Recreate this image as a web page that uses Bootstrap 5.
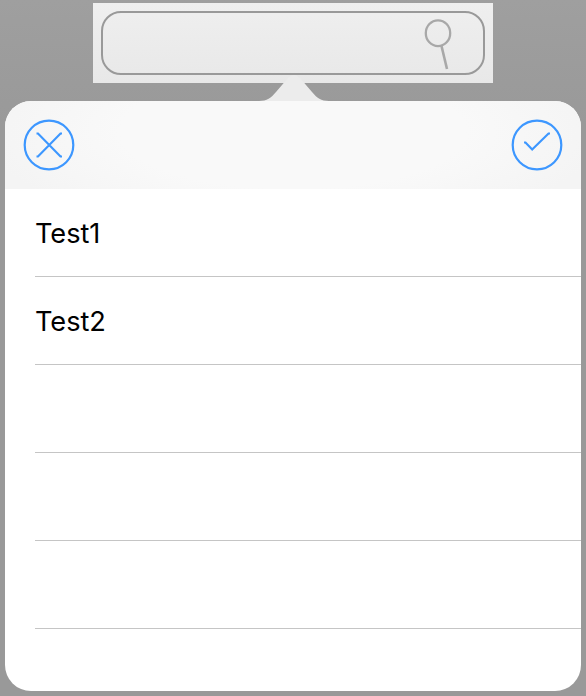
<!DOCTYPE html>
<html lang="en">
<head>
<meta charset="utf-8">
<meta name="viewport" content="width=device-width, initial-scale=1">
<title>Search popover</title>
<link href="https://cdn.jsdelivr.net/npm/bootstrap@5.3.0/dist/css/bootstrap.min.css" rel="stylesheet">
<style>
  html, body { height: 100%; }
  body { background: linear-gradient(#9f9f9f, #999 18%, #999); font-family: Inter, "Liberation Sans", sans-serif; color: #000; }
  .page { padding-top: 3px; }
  .search-panel { width: 400px; height: 80px; padding: 8px; background: linear-gradient(#efefef, #e8e8e8); }
  .search-field { height: 64px; border: 2px solid #999; border-radius: 20px; padding: 0 30px 0 12px; }
  .search-input { font-size: 24px; outline: 0; min-width: 0; }
  .arrow-tip { left: 50%; top: -26px; transform: translateX(-50%); margin-left: 1px; }
  .popover-panel { width: 576px; height: 590px; margin: 18px 0 0 5px; }
  .panel-surface { border-radius: 26px; }
  .panel-header { height: 88px; padding: 0 18px; background: radial-gradient(ellipse 60% 130% at 50% 35%, #f9f9f9 50%, #f4f4f4 90%); }
  .round-btn { width: 52px; height: 52px; color: #3d97ff; }
  .option-list { padding-left: 30px; }
  .option-row { height: 88px; padding-top: 2px; border-bottom: 1px solid #c5c5c5; font-size: 27.2px; line-height: 1; letter-spacing: -.05px; }
</style>
</head>
<body class="overflow-hidden">
<main class="page">
  <div class="search-panel mx-auto">
    <div class="search-field d-flex align-items-center">
      <input class="search-input flex-grow-1 border-0 bg-transparent" type="text" aria-label="Search">
      <svg class="flex-shrink-0" width="30" height="54" viewBox="0 0 30 54" fill="none" stroke="#a8a8a8" stroke-width="2.3" aria-hidden="true">
        <ellipse cx="15" cy="17.2" rx="12.2" ry="12.9"/>
        <path d="M18.5 30 24 53" stroke-width="2.6"/>
      </svg>
    </div>
  </div>
  <section class="popover-panel position-relative">
    <svg class="arrow-tip position-absolute" width="70" height="26" viewBox="2 0 70 26" fill="#ececec" aria-hidden="true">
      <path d="M2 26C10 26 14 23 19 17L31 3Q37-3 43 3L55 17C60 23 64 26 72 26Z"/>
    </svg>
    <div class="panel-surface h-100 bg-white overflow-hidden position-relative">
      <header class="panel-header d-flex align-items-center justify-content-between">
        <button class="btn p-0 border-0 round-btn d-flex" type="button" aria-label="Cancel">
          <svg width="52" height="52" viewBox="0 0 52 52" fill="none" stroke="currentColor" stroke-width="2.2">
            <circle cx="26" cy="26" r="24.3"/>
            <path d="M13.5 14.5H15L37.5 37.5H39M39 14.5H37.5L15 37.5H13.5"/>
          </svg>
        </button>
        <button class="btn p-0 border-0 round-btn d-flex" type="button" aria-label="Confirm">
          <svg width="52" height="52" viewBox="0 0 52 52" fill="none" stroke="currentColor" stroke-width="2.2">
            <circle cx="26" cy="26" r="24.3"/>
            <path d="M13 23.5H14.5L21.2 30.5 37.5 14.5H39"/>
          </svg>
        </button>
      </header>
      <ul class="option-list list-unstyled mb-0">
        <li class="option-row d-flex align-items-center">Test1</li>
        <li class="option-row d-flex align-items-center">Test2</li>
        <li class="option-row"></li>
        <li class="option-row"></li>
        <li class="option-row"></li>
      </ul>
    </div>
  </section>
</main>
<script src="https://cdn.jsdelivr.net/npm/bootstrap@5.3.0/dist/js/bootstrap.bundle.min.js"></script>
</body>
</html>
